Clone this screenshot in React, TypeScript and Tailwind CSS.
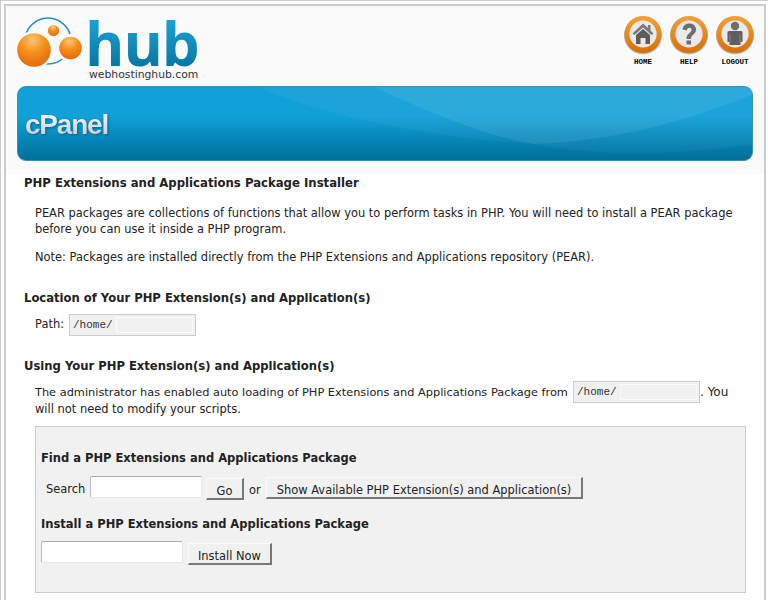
import { useId } from "react";

const VERDANA = "font-['DejaVu_Sans',Verdana,sans-serif]";

function Logo() {
  return (
    <div className="flex items-start h-[70px]">
      <svg width="72" height="60" viewBox="0 0 72 60" className="shrink-0">
        <defs>
          <radialGradient id="orb" cx="45%" cy="20%" r="85%">
            <stop offset="0%" stopColor="#fcc77a" />
            <stop offset="45%" stopColor="#f58f1a" />
            <stop offset="100%" stopColor="#e2660a" />
          </radialGradient>
        </defs>
        <circle cx="31" cy="25" r="23" fill="none" stroke="#1f93c6" strokeWidth="1.6" />
        <circle cx="17" cy="34" r="19" fill="#fafafa" />
        <circle cx="17" cy="34" r="16.8" fill="url(#orb)" />
        <circle cx="36.5" cy="14.5" r="8" fill="#fafafa" />
        <circle cx="36.5" cy="14.5" r="5.6" fill="url(#orb)" />
        <circle cx="53.5" cy="32" r="14" fill="#fafafa" />
        <circle cx="53.5" cy="32" r="11.3" fill="url(#orb)" />
      </svg>
      <div className="ml-[-4px] flex flex-col">
        <span className="block font-['Open_Sans',sans-serif] font-bold text-[60px] leading-[54px] tracking-[-1px] h-[53px] text-transparent bg-clip-text bg-gradient-to-b from-[#1ba6dd] to-[#07759f]">
          hub
        </span>
        <span className={`${VERDANA} ml-[4px] text-[10.8px] leading-[12px] text-[#333]`}>webhostinghub.com</span>
      </div>
    </div>
  );
}

function NavIcon({ label, children }: { label: string; children: React.ReactNode }) {
  const id = useId();
  return (
    <div className="flex flex-col items-center w-[46px]">
      <svg width="40" height="40" viewBox="0 0 40 40">
        <defs>
          <linearGradient id={id} x1="0" y1="0" x2="0" y2="1">
            <stop offset="0%" stopColor="#f5a13a" />
            <stop offset="100%" stopColor="#d96d05" />
          </linearGradient>
        </defs>
        <circle cx="20" cy="20.5" r="19" fill="#bbb" />
        <circle cx="20" cy="19.5" r="18.6" fill={`url(#${id})`} />
        <circle cx="20" cy="19" r="13.6" fill="#e9e9e9" />
        {children}
      </svg>
      <span className="font-['Liberation_Mono',monospace] font-bold text-[7.5px] leading-[10px] mt-[2px] text-black">{label}</span>
    </div>
  );
}

function ReadonlyPath() {
  return (
    <span className="inline-flex align-middle items-center shrink-0 h-[22px] w-[127px] bg-[#f0f0f0] border border-[#ccc] pl-[3px] pr-[2px]">
      <span className="font-['Liberation_Mono',monospace] text-[11px] text-[#333] w-[43px] shrink-0">/home/</span>
      <span className="flex-1 h-[16px] border border-[#fafafa]" />
    </span>
  );
}

function Btn({ children, className = "" }: { children: React.ReactNode; className?: string }) {
  return (
    <button
      className={`flex items-start justify-center h-[22px] pt-[5px] leading-[14px] bg-[#f0f0f0] border-t border-l border-t-[#fafafa] border-l-[#fafafa] border-r-2 border-b-2 border-r-[#777] border-b-[#777] text-[11.45px] text-[#222] ${className}`}
    >
      {children}
    </button>
  );
}

function TextBox({ className = "" }: { className?: string }) {
  return <input className={`h-[22px] bg-white border border-[#e4e8ec] border-t-[#aaa] border-l-[#bbb] rounded-[2px] ${className}`} />;
}

export default function App() {
  return (
    <div className={`${VERDANA} h-screen overflow-hidden bg-white border-t border-l border-[#ccc] pt-[3px] pl-[3px] text-[11.45px] text-[#222]`}>
      <div className="w-[762px] h-[700px] border-t-2 border-l-2 border-r-2 border-[#ccc]">
        <div className="bg-[#fafafa] px-[11px] pt-[10px] h-[168px]">
          <div className="flex justify-between">
            <Logo />
            <div className="flex gap-0 mr-[-5px] mt-[-1px]">
              <NavIcon label="HOME">
                <path d="M20 8.5 L25 13 V10 H27.5 V15.5 L30.5 18.5 L28.5 20 L20 12.5 L11.5 20 L9.5 18.5 Z" fill="#7a7a7a" />
                <path d="M13 20 L20 14 L27 20 V29 H22.5 V23 H17.5 V29 H13 Z" fill="#5c5c5c" />
              </NavIcon>
              <NavIcon label="HELP">
                <path d="M13.5 14.5 C14 6.5 27 6.5 27 14.5 C27 19.5 22 19.5 22 24 H17.5 C17.5 18 22.5 18 22.5 15 C22.5 12 18 12 17.8 15.5 Z" fill="#6d6d6d" />
                <rect x="17.5" y="25.5" width="4.5" height="4" fill="#6d6d6d" />
              </NavIcon>
              <NavIcon label="LOGOUT">
                <circle cx="20" cy="11" r="4.2" fill="#6d6d6d" />
                <path d="M12.5 17.5 Q12.5 16 14 16 H26 Q27.5 16 27.5 17.5 V27 H25.5 V30 H14.5 V27 H12.5 Z" fill="#5f5f5f" />
                <path d="M15 19 V27 M25 19 V27" stroke="#9a9a9a" strokeWidth="0.7" />
              </NavIcon>
            </div>
          </div>
          <div className="relative h-[75px] w-[736px] rounded-[9px] overflow-hidden border border-[#3b8fb0] bg-gradient-to-b from-[#12a0d9] from-40% to-[#006f9b] flex items-center">
            <svg className="absolute inset-0" width="736" height="75" viewBox="0 0 736 75" preserveAspectRatio="none">
              <path d="M239 0 C310 30 420 52 516 57 C560 66 640 72 736 57 V0 Z" fill="#ffffff" opacity="0.04" />
              <path d="M356 0 C410 25 470 50 516 57 C600 55 680 30 736 7 V0 Z" fill="#ffffff" opacity="0.08" />
            </svg>
            <span className="relative ml-[7px] mt-[3px] font-['Liberation_Sans',sans-serif] font-bold text-[28px] leading-[32px] tracking-[-1.2px] text-transparent bg-clip-text bg-gradient-to-b from-white to-[#b9c6cc] drop-shadow-[1px_1px_1px_rgba(0,50,80,0.5)]">
              cPanel
            </span>
          </div>
        </div>

        <div className="bg-white pl-[18px] pr-[20px] pt-[1px]">
          <h1 className="font-bold text-[11.7px] leading-[16px]">PHP Extensions and Applications Package Installer</h1>
          <p className="pl-[11px] mt-[14px] leading-[16px] w-[720px]">
            PEAR packages are collections of functions that allow you to perform tasks in PHP. You will need to install a PEAR package before you can use it inside a PHP program.
          </p>
          <p className="pl-[11px] mt-[12px] leading-[16px]">
            Note: Packages are installed directly from the PHP Extensions and Applications repository (PEAR).
          </p>

          <h2 className="font-bold text-[11.6px] leading-[16px] mt-[25px]">Location of Your PHP Extension(s) and Application(s)</h2>
          <div className="pl-[11px] mt-[8px] h-[22px] flex items-center gap-[5px]">
            <span>Path:</span>
            <ReadonlyPath />
          </div>

          <h2 className="font-bold text-[11.6px] leading-[16px] mt-[22px]">Using Your PHP Extension(s) and Application(s)</h2>
          <div className="pl-[11px] mt-[9px] leading-[16px]">
            <div className="h-[18px] flex items-center whitespace-nowrap">
              <span className="w-[538px] shrink-0 text-[11.35px]">The administrator has enabled auto loading of PHP Extensions and Applications Package from</span>
              <ReadonlyPath />
              <span className="text-[12px]">. You</span>
            </div>
            <div>will not need to modify your scripts.</div>
          </div>

          <div className="ml-[11px] mt-[9px] w-[711px] h-[167px] bg-[#f1f1f1] border border-[#ccc] pl-[5px] pt-[23px]">
            <h3 className="font-bold text-[11.5px] leading-[16px]">Find a PHP Extensions and Applications Package</h3>
            <div className="flex items-start mt-[10px] pl-[5px]">
              <span className="mt-[5px] w-[44px] shrink-0">Search</span>
              <TextBox className="w-[112px]" />
              <Btn className="w-[38px] ml-[4px] mt-[2px]">Go</Btn>
              <span className="ml-[5px] w-[17px] shrink-0 mt-[6px]">or</span>
              <Btn className="w-[317px] mt-[1px]">Show Available PHP Extension(s) and Application(s)</Btn>
            </div>
            <h3 className="font-bold text-[11.5px] leading-[16px] mt-[16px]">Install a PHP Extensions and Applications Package</h3>
            <div className="flex items-start mt-[9px]">
              <TextBox className="w-[142px]" />
              <Btn className="w-[84px] ml-[5px] mt-[2px]">Install Now</Btn>
            </div>
          </div>
        </div>
      </div>
    </div>
  );
}
